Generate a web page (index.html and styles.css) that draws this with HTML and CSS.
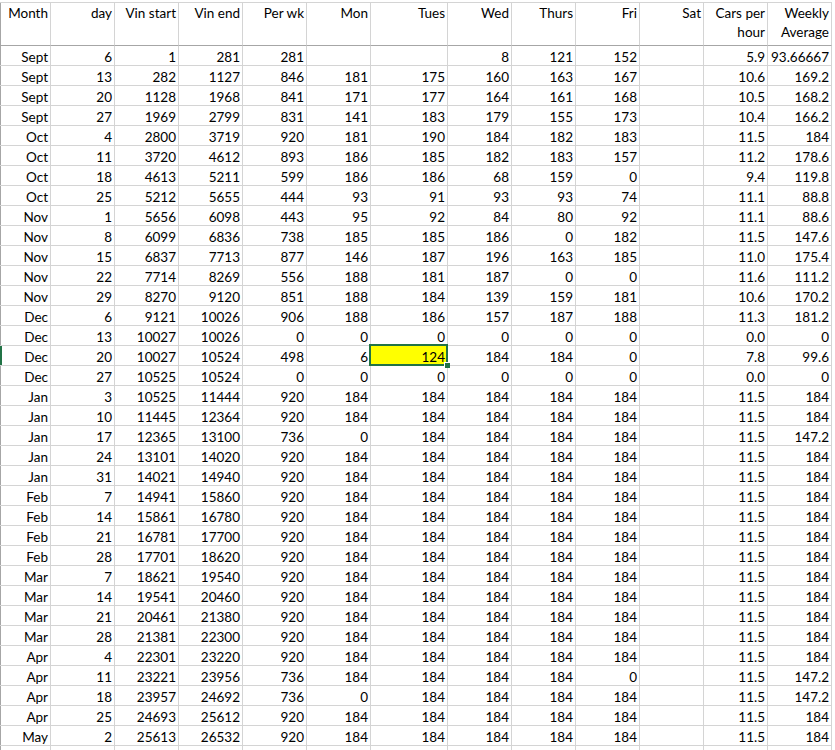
FILE: index.html
```html
<!DOCTYPE html>
<html>
<head>
<meta charset="utf-8">
<link rel="stylesheet" href="styles.css">
</head>
<body>
<div class="sheet">
<div class="row head"><span>Month</span><span>day</span><span>Vin start</span><span>Vin end</span><span>Per wk</span><span>Mon</span><span>Tues</span><span>Wed</span><span>Thurs</span><span>Fri</span><span>Sat</span><span>Cars per hour</span><span>Weekly Average</span></div>
<div class="row"><span>Sept</span><span>6</span><span>1</span><span>281</span><span>281</span><span></span><span></span><span>8</span><span>121</span><span>152</span><span></span><span>5.9</span><span>93.66667</span></div>
<div class="row"><span>Sept</span><span>13</span><span>282</span><span>1127</span><span>846</span><span>181</span><span>175</span><span>160</span><span>163</span><span>167</span><span></span><span>10.6</span><span>169.2</span></div>
<div class="row"><span>Sept</span><span>20</span><span>1128</span><span>1968</span><span>841</span><span>171</span><span>177</span><span>164</span><span>161</span><span>168</span><span></span><span>10.5</span><span>168.2</span></div>
<div class="row"><span>Sept</span><span>27</span><span>1969</span><span>2799</span><span>831</span><span>141</span><span>183</span><span>179</span><span>155</span><span>173</span><span></span><span>10.4</span><span>166.2</span></div>
<div class="row"><span>Oct</span><span>4</span><span>2800</span><span>3719</span><span>920</span><span>181</span><span>190</span><span>184</span><span>182</span><span>183</span><span></span><span>11.5</span><span>184</span></div>
<div class="row"><span>Oct</span><span>11</span><span>3720</span><span>4612</span><span>893</span><span>186</span><span>185</span><span>182</span><span>183</span><span>157</span><span></span><span>11.2</span><span>178.6</span></div>
<div class="row"><span>Oct</span><span>18</span><span>4613</span><span>5211</span><span>599</span><span>186</span><span>186</span><span>68</span><span>159</span><span>0</span><span></span><span>9.4</span><span>119.8</span></div>
<div class="row"><span>Oct</span><span>25</span><span>5212</span><span>5655</span><span>444</span><span>93</span><span>91</span><span>93</span><span>93</span><span>74</span><span></span><span>11.1</span><span>88.8</span></div>
<div class="row"><span>Nov</span><span>1</span><span>5656</span><span>6098</span><span>443</span><span>95</span><span>92</span><span>84</span><span>80</span><span>92</span><span></span><span>11.1</span><span>88.6</span></div>
<div class="row"><span>Nov</span><span>8</span><span>6099</span><span>6836</span><span>738</span><span>185</span><span>185</span><span>186</span><span>0</span><span>182</span><span></span><span>11.5</span><span>147.6</span></div>
<div class="row"><span>Nov</span><span>15</span><span>6837</span><span>7713</span><span>877</span><span>146</span><span>187</span><span>196</span><span>163</span><span>185</span><span></span><span>11.0</span><span>175.4</span></div>
<div class="row"><span>Nov</span><span>22</span><span>7714</span><span>8269</span><span>556</span><span>188</span><span>181</span><span>187</span><span>0</span><span>0</span><span></span><span>11.6</span><span>111.2</span></div>
<div class="row"><span>Nov</span><span>29</span><span>8270</span><span>9120</span><span>851</span><span>188</span><span>184</span><span>139</span><span>159</span><span>181</span><span></span><span>10.6</span><span>170.2</span></div>
<div class="row"><span>Dec</span><span>6</span><span>9121</span><span>10026</span><span>906</span><span>188</span><span>186</span><span>157</span><span>187</span><span>188</span><span></span><span>11.3</span><span>181.2</span></div>
<div class="row"><span>Dec</span><span>13</span><span>10027</span><span>10026</span><span>0</span><span>0</span><span>0</span><span>0</span><span>0</span><span>0</span><span></span><span>0.0</span><span>0</span></div>
<div class="row active"><span>Dec</span><span>20</span><span>10027</span><span>10524</span><span>498</span><span>6</span><span class="sel">124<i class="handle"></i></span><span>184</span><span>184</span><span>0</span><span></span><span>7.8</span><span>99.6</span></div>
<div class="row"><span>Dec</span><span>27</span><span>10525</span><span>10524</span><span>0</span><span>0</span><span>0</span><span>0</span><span>0</span><span>0</span><span></span><span>0.0</span><span>0</span></div>
<div class="row"><span>Jan</span><span>3</span><span>10525</span><span>11444</span><span>920</span><span>184</span><span>184</span><span>184</span><span>184</span><span>184</span><span></span><span>11.5</span><span>184</span></div>
<div class="row"><span>Jan</span><span>10</span><span>11445</span><span>12364</span><span>920</span><span>184</span><span>184</span><span>184</span><span>184</span><span>184</span><span></span><span>11.5</span><span>184</span></div>
<div class="row"><span>Jan</span><span>17</span><span>12365</span><span>13100</span><span>736</span><span>0</span><span>184</span><span>184</span><span>184</span><span>184</span><span></span><span>11.5</span><span>147.2</span></div>
<div class="row"><span>Jan</span><span>24</span><span>13101</span><span>14020</span><span>920</span><span>184</span><span>184</span><span>184</span><span>184</span><span>184</span><span></span><span>11.5</span><span>184</span></div>
<div class="row"><span>Jan</span><span>31</span><span>14021</span><span>14940</span><span>920</span><span>184</span><span>184</span><span>184</span><span>184</span><span>184</span><span></span><span>11.5</span><span>184</span></div>
<div class="row"><span>Feb</span><span>7</span><span>14941</span><span>15860</span><span>920</span><span>184</span><span>184</span><span>184</span><span>184</span><span>184</span><span></span><span>11.5</span><span>184</span></div>
<div class="row"><span>Feb</span><span>14</span><span>15861</span><span>16780</span><span>920</span><span>184</span><span>184</span><span>184</span><span>184</span><span>184</span><span></span><span>11.5</span><span>184</span></div>
<div class="row"><span>Feb</span><span>21</span><span>16781</span><span>17700</span><span>920</span><span>184</span><span>184</span><span>184</span><span>184</span><span>184</span><span></span><span>11.5</span><span>184</span></div>
<div class="row"><span>Feb</span><span>28</span><span>17701</span><span>18620</span><span>920</span><span>184</span><span>184</span><span>184</span><span>184</span><span>184</span><span></span><span>11.5</span><span>184</span></div>
<div class="row"><span>Mar</span><span>7</span><span>18621</span><span>19540</span><span>920</span><span>184</span><span>184</span><span>184</span><span>184</span><span>184</span><span></span><span>11.5</span><span>184</span></div>
<div class="row"><span>Mar</span><span>14</span><span>19541</span><span>20460</span><span>920</span><span>184</span><span>184</span><span>184</span><span>184</span><span>184</span><span></span><span>11.5</span><span>184</span></div>
<div class="row"><span>Mar</span><span>21</span><span>20461</span><span>21380</span><span>920</span><span>184</span><span>184</span><span>184</span><span>184</span><span>184</span><span></span><span>11.5</span><span>184</span></div>
<div class="row"><span>Mar</span><span>28</span><span>21381</span><span>22300</span><span>920</span><span>184</span><span>184</span><span>184</span><span>184</span><span>184</span><span></span><span>11.5</span><span>184</span></div>
<div class="row"><span>Apr</span><span>4</span><span>22301</span><span>23220</span><span>920</span><span>184</span><span>184</span><span>184</span><span>184</span><span>184</span><span></span><span>11.5</span><span>184</span></div>
<div class="row"><span>Apr</span><span>11</span><span>23221</span><span>23956</span><span>736</span><span>184</span><span>184</span><span>184</span><span>184</span><span>0</span><span></span><span>11.5</span><span>147.2</span></div>
<div class="row"><span>Apr</span><span>18</span><span>23957</span><span>24692</span><span>736</span><span>0</span><span>184</span><span>184</span><span>184</span><span>184</span><span></span><span>11.5</span><span>147.2</span></div>
<div class="row"><span>Apr</span><span>25</span><span>24693</span><span>25612</span><span>920</span><span>184</span><span>184</span><span>184</span><span>184</span><span>184</span><span></span><span>11.5</span><span>184</span></div>
<div class="row"><span>May</span><span>2</span><span>25613</span><span>26532</span><span>920</span><span>184</span><span>184</span><span>184</span><span>184</span><span>184</span><span></span><span>11.5</span><span>184</span></div>
<div class="row"><span></span><span></span><span></span><span></span><span></span><span></span><span></span><span></span><span></span><span></span><span></span><span></span><span></span></div>
</div>
</body>
</html>
```
FILE: styles.css
```css
html, body {
  margin: 0;
  padding: 0;
  background: #ffffff;
}
body {
  font-family: Lato, "Liberation Sans", sans-serif;
  font-size: 13.5px;
  color: #000000;
  overflow: hidden;
}
.sheet {
  margin-top: 2px;
  border-top: 1px solid #d4d4d4;
  width: 832px;
  display: flex;
  flex-direction: column;
}
.row {
  display: grid;
  grid-template-columns: 51px repeat(5, 64px) 77px repeat(6, 64px);
  height: 20px;
}
.row > span {
  box-sizing: border-box;
  border-right: 1px solid #d4d4d4;
  border-bottom: 1px solid #d4d4d4;
  padding-right: 2px;
  display: flex;
  align-items: flex-end;
  justify-content: flex-end;
  text-align: right;
  line-height: 16px;
  white-space: nowrap;
  position: relative;
}
.row > span:first-child {
  box-shadow: inset 1px 0 0 #a6a6a6;
}
.row.active > span:first-child {
  box-shadow: inset 2px 0 0 #217346;
}
.row.head {
  height: 43px;
}
.row.head > span {
  border-bottom-color: #a6a6a6;
  align-items: flex-start;
  white-space: normal;
  line-height: 19px;
  padding-top: 1px;
}
.row.head > span:nth-child(n+12) {
  display: block;
}
.sel {
  background: #ffff00;
  z-index: 2;
}
.sel::after {
  content: "";
  position: absolute;
  top: -2px;
  left: -2px;
  right: -1px;
  bottom: -1px;
  border: 2px solid #217346;
}
.handle {
  position: absolute;
  left: 73px;
  top: 16px;
  width: 5px;
  height: 5px;
  background: #217346;
  border-left: 1px solid #ffffff;
  border-top: 1px solid #ffffff;
  z-index: 3;
}
```
